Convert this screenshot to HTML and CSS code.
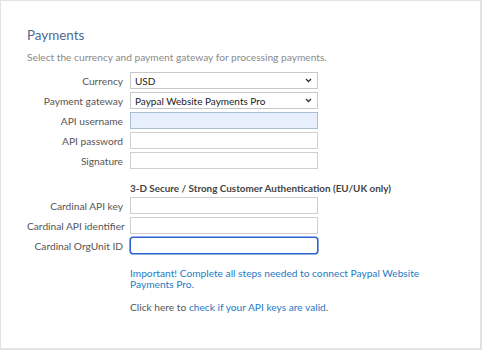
FILE: index.html
```html
<!DOCTYPE html>
<html>
<head>
<meta charset="utf-8">
<link rel="stylesheet" href="styles.css">
</head>
<body>
<div class="frame">
  <h1 class="title">Payments</h1>
  <p class="intro">Select the currency and payment gateway for processing payments.</p>
  <div class="form">
    <label class="lbl">Currency</label>
    <div class="field select"><span>USD</span><svg class="chev" width="7" height="5" viewBox="0 0 7 5"><path d="M1 1 L3.5 3.5 L6 1" fill="none" stroke="#333" stroke-width="1.3"/></svg></div>
    <label class="lbl">Payment gateway</label>
    <div class="field select"><span>Paypal Website Payments Pro</span><svg class="chev" width="7" height="5" viewBox="0 0 7 5"><path d="M1 1 L3.5 3.5 L6 1" fill="none" stroke="#333" stroke-width="1.3"/></svg></div>
    <label class="lbl">API username</label>
    <div class="field autofill"></div>
    <label class="lbl">API password</label>
    <div class="field"></div>
    <label class="lbl">Signature</label>
    <div class="field"></div>
    <div class="sect">3-D Secure / Strong Customer Authentication (EU/UK only)</div>
    <label class="lbl">Cardinal API key</label>
    <div class="field"></div>
    <label class="lbl">Cardinal API identifier</label>
    <div class="field"></div>
    <label class="lbl">Cardinal OrgUnit ID</label>
    <div class="field focus"></div>
    <p class="note important">Important! Complete all steps needed to connect Paypal Website Payments Pro.</p>
    <p class="note">Click here to <a class="link">check if your API keys are valid</a>.</p>
  </div>
</div>
</body>
</html>
```

FILE: styles.css
```css
* { box-sizing: border-box; }
html, body { margin: 0; padding: 0; background: #fff; }
body { font-family: "Lato", "Liberation Sans", sans-serif; }
.frame {
  width: 482px;
  height: 350px;
  border: 1px solid #e2e2e2;
  border-right-width: 2px;
  border-bottom-width: 2px;
  padding: 26px 0 0 26px;
}
.title {
  margin: 0;
  font-size: 13.4px;
  font-weight: 400;
  color: #4f6890;
  line-height: 17px;
}
.intro {
  margin: 6px 0 0;
  font-size: 10.2px;
  color: #8a8a8a;
  line-height: 14px;
}
.form {
  margin-top: 8px;
  display: grid;
  grid-template-columns: 96px 188px;
  column-gap: 7px;
  row-gap: 3px;
  align-items: center;
}
.lbl {
  text-align: right;
  white-space: nowrap;
  font-size: 10.2px;
  color: #555;
  line-height: 16px;
}
.field {
  height: 17px;
  border: 1px solid #cfcfcf;
  background: #fff;
  display: flex;
  align-items: center;
  padding: 0 5px 0 4px;
  font-size: 10px;
  color: #222;
}
.select { justify-content: space-between; border-color: #c8c8c8; }
.chev { flex: none; }
.autofill { background: #e8f0fe; border-color: #a9bdd2; }
.focus { border-color: #2c62cf; border-radius: 3px; box-shadow: 0 0 0 0.6px #2c62cf; }
.sect {
  grid-column: 2 / span 1;
  white-space: nowrap;
  font-size: 9.9px;
  font-weight: 700;
  color: #444;
  margin: 10px 0 0;
  line-height: 12px;
}
.note {
  grid-column: 2 / span 1;
  width: 300px;
  margin: 0;
  font-size: 10.2px;
  line-height: 11px;
  color: #555;
}
.important { color: #1e7ac4; margin-top: 11px; }
.note + .note { margin-top: 9px; }
.link { color: #1e7ac4; }
```
